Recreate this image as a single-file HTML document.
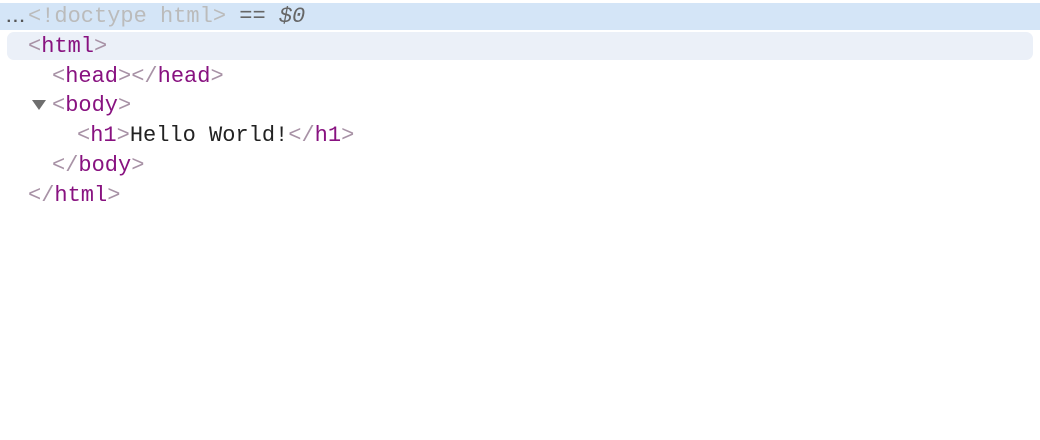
<!DOCTYPE html>
<html><head><style>
body{margin:0;width:1040px;height:440px;background:#fff;overflow:hidden;font-family:"Liberation Mono",monospace;font-size:22px;}
.r{position:absolute;left:0;height:30px;line-height:30px;white-space:pre;}
.b{color:#a892a6}.t{color:#881280}.x{color:#222}
</style></head><body>
<div style="position:absolute;left:0;top:3px;width:1040px;height:27px;background:#d4e5f7"></div>
<div style="position:absolute;left:7px;top:32px;width:1026px;height:28px;background:#ebf0f8;border-radius:7px"></div>
<div class="r" style="top:2px;left:4px;color:#555"><span style="display:inline-block;width:24px;font-size:16px;font-weight:bold;letter-spacing:-3px;color:#555">...</span><span style="color:#bbb">&lt;!doctype html&gt;</span> <span style="color:#666">== <i>$0</i></span></div>
<div class="r" style="top:32px;left:28px"><span class="b">&lt;</span><span class="t">html</span><span class="b">&gt;</span></div>
<div class="r" style="top:62px;left:52px"><span class="b">&lt;</span><span class="t">head</span><span class="b">&gt;&lt;/</span><span class="t">head</span><span class="b">&gt;</span></div>
<div style="position:absolute;left:32px;top:100px;width:0;height:0;border-left:7px solid transparent;border-right:7px solid transparent;border-top:10px solid #6e6e6e"></div>
<div class="r" style="top:91px;left:52px"><span class="b">&lt;</span><span class="t">body</span><span class="b">&gt;</span></div>
<div class="r" style="top:121px;left:77px"><span class="b">&lt;</span><span class="t">h1</span><span class="b">&gt;</span><span class="x">Hello World!</span><span class="b">&lt;/</span><span class="t">h1</span><span class="b">&gt;</span></div>
<div class="r" style="top:151px;left:52px"><span class="b">&lt;/</span><span class="t">body</span><span class="b">&gt;</span></div>
<div class="r" style="top:181px;left:28px"><span class="b">&lt;/</span><span class="t">html</span><span class="b">&gt;</span></div>
</body></html>
